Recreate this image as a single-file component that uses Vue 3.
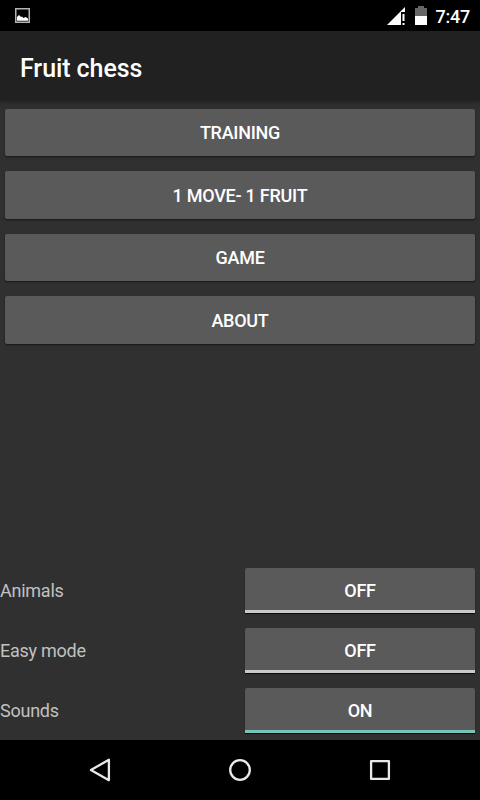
<script setup>
import { ref } from 'vue'

const menu = ['Training', '1 move- 1 fruit', 'Game', 'About']

const settings = ref([
  { label: 'Animals', on: false },
  { label: 'Easy mode', on: false },
  { label: 'Sounds', on: true }
])
</script>

<template>
  <div class="screen">
    <div class="status-bar">
      <svg class="picture-icon" viewBox="0 0 15 15" width="15" height="15" aria-hidden="true">
        <rect x="0.75" y="0.75" width="13.5" height="13.5" fill="none" stroke="#b4b4b4" stroke-width="1.5" />
        <path d="M2 12.8V9L4 7L6 9L7 8.5L8.5 10L10.5 9L13 10.5V12.8Z" fill="#fff" />
      </svg>
      <svg class="signal-icon" viewBox="0 0 18 18" width="18" height="18" aria-hidden="true">
        <path d="M0 18L18 0V5H14V18Z" fill="#fff" />
        <path d="M15.5 7H17.5V14H15.5ZM15.5 16H17.5V18H15.5Z" fill="#fff" />
      </svg>
      <svg class="battery-icon" viewBox="0 0 12 19" width="12" height="19" aria-hidden="true">
        <path d="M3 0H9V2H12V10H0V2H3Z" fill="#666" />
        <path d="M0 10H12V19H0Z" fill="#fff" />
      </svg>
      <span class="clock">7:47</span>
    </div>

    <header class="app-bar">
      <h1 class="title">Fruit chess</h1>
    </header>

    <main class="content">
      <nav class="menu">
        <button v-for="item in menu" :key="item" type="button" class="btn">{{ item }}</button>
      </nav>

      <div class="settings">
        <div v-for="item in settings" :key="item.label" class="setting">
          <span class="setting-label">{{ item.label }}</span>
          <button
            type="button"
            class="btn toggle"
            :class="{ 'toggle--on': item.on }"
            :aria-pressed="item.on"
            @click="item.on = !item.on"
          >
            {{ item.on ? 'On' : 'Off' }}
          </button>
        </div>
      </div>
    </main>

    <div class="nav-bar">
      <svg viewBox="0 0 24 24" width="24" height="24" aria-hidden="true">
        <path d="M20.9 1.8V22.2L2.9 12Z" />
      </svg>
      <svg viewBox="0 0 24 24" width="24" height="24" aria-hidden="true">
        <circle cx="12" cy="12" r="9.8" />
      </svg>
      <svg viewBox="0 0 24 24" width="24" height="24" aria-hidden="true">
        <rect x="3.1" y="3.1" width="17.8" height="17.8" />
      </svg>
    </div>
  </div>
</template>

<style>
body {
  margin: 0;
  background: #303030;
}
</style>

<style scoped>
.screen {
  display: flex;
  flex-direction: column;
  width: 480px;
  height: 800px;
  overflow: hidden;
  background: #303030;
  color: #fff;
  font-family: Roboto, 'Liberation Sans', sans-serif;
}

.status-bar {
  display: flex;
  align-items: flex-start;
  flex-shrink: 0;
  box-sizing: border-box;
  height: 31px;
  padding: 0 10px 0 15px;
  background: #000;
}

.picture-icon {
  margin: 8px auto 0 0;
}

.signal-icon {
  margin: 7px 10px 0 0;
}

.battery-icon {
  margin: 6px 8.5px 0 0;
}

.clock {
  width: 34.5px;
  margin-top: 6px;
  font-size: 18px;
  font-weight: 500;
  letter-spacing: -0.25px;
  line-height: 21px;
  white-space: nowrap;
}

.app-bar {
  display: flex;
  align-items: center;
  flex-shrink: 0;
  box-sizing: border-box;
  height: 70px;
  padding: 4px 20px 0;
  background: #212121;
  box-shadow: 0 1px 5px rgba(0, 0, 0, 0.35);
}

.title {
  margin: 0;
  font-size: 25px;
  font-weight: 500;
  letter-spacing: -0.08px;
  line-height: 31px;
}

.content {
  display: flex;
  flex: 1;
  flex-direction: column;
  justify-content: space-between;
  min-height: 0;
}

.menu {
  display: flex;
  flex-direction: column;
  gap: 15px;
  padding: 7.5px 5px 0;
}

.btn {
  box-sizing: border-box;
  height: 47.5px;
  padding: 2px 0 0;
  border: 0;
  border-radius: 2px;
  background: #5a5a5b;
  box-shadow: 0 1px 2px rgba(0, 0, 0, 0.55);
  color: #fff;
  font-family: inherit;
  font-size: 18px;
  font-weight: 500;
  letter-spacing: -0.25px;
  line-height: 22px;
  text-transform: uppercase;
}

.setting {
  display: flex;
  align-items: center;
  box-sizing: border-box;
  height: 60px;
  padding-right: 5px;
}

.setting-label {
  flex: 1;
  padding-top: 2px;
  color: #c1c1c1;
  font-size: 18px;
  letter-spacing: -0.25px;
  line-height: 22px;
}

.toggle {
  width: 230px;
  height: 45px;
  padding-top: 4px;
  border-bottom: 3px solid #cacaca;
  border-radius: 2px 2px 0 0;
  box-shadow: 0 1px 1px rgba(0, 0, 0, 0.8);
}

.toggle--on {
  border-bottom-color: #77c5ba;
}

.nav-bar {
  display: flex;
  align-items: center;
  justify-content: center;
  flex-shrink: 0;
  gap: 116px;
  height: 60px;
  background: #000;
}

.nav-bar svg {
  fill: none;
  stroke: #e9e9e9;
  stroke-width: 2.3;
  stroke-linejoin: round;
}
</style>
